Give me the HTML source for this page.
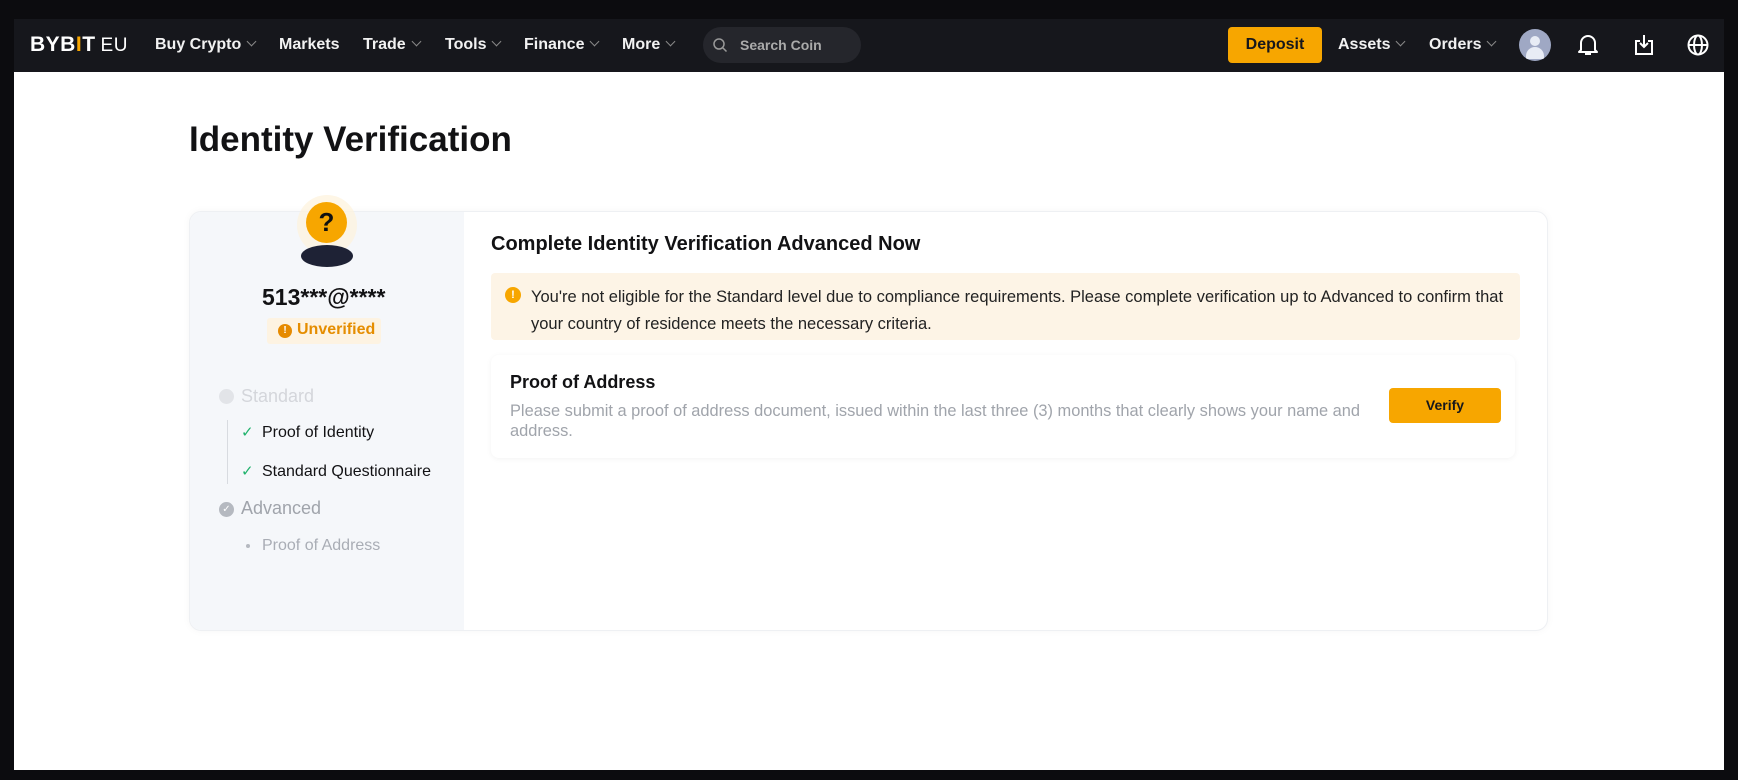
<!DOCTYPE html>
<html><head><meta charset="utf-8"><style>
*{margin:0;padding:0;box-sizing:border-box}
body{width:1738px;height:780px;background:#0c0c0f;position:relative;overflow:hidden;font-family:"Liberation Sans",sans-serif;}
.a{position:absolute;white-space:nowrap}
#nav{left:14px;top:19px;width:1710px;height:53px;background:#16171c}
.n{color:#f2f2f2;font-size:16px;top:36px;font-weight:bold}
.chev{display:inline-block;width:7px;height:7px;border-right:1.2px solid #888;border-bottom:1.2px solid #888;transform:rotate(45deg);margin-left:7px;position:relative;top:-4px}
#main{left:14px;top:72px;width:1710px;height:698px;background:#fff}
</style></head><body>
<div id="nav" class="a"></div>
<div class="a" style="left:30px;top:33px;color:#fff;font-size:21px;font-weight:bold;letter-spacing:0.5px">BYB<span style="color:#f7a600">I</span>T<span style="font-weight:normal;font-size:19px;margin-left:5px">EU</span></div>
<div class="a n" style="left:155px">Buy Crypto<span class="chev"></span></div>
<div class="a n" style="left:279px">Markets</div>
<div class="a n" style="left:363px">Trade<span class="chev"></span></div>
<div class="a n" style="left:445px">Tools<span class="chev"></span></div>
<div class="a n" style="left:524px">Finance<span class="chev"></span></div>
<div class="a n" style="left:622px">More<span class="chev"></span></div>
<div class="a" style="left:703px;top:27px;width:158px;height:36px;border-radius:18px;background:#25262c"></div>
<svg class="a" style="left:712px;top:37px" width="16" height="16" viewBox="0 0 16 16"><circle cx="7" cy="7" r="5" fill="none" stroke="#999" stroke-width="1.5"/><path d="M11 11l3.5 3.5" stroke="#999" stroke-width="1.5"/></svg>
<div class="a" style="left:740px;top:37px;color:#aaa;font-size:14px;font-weight:bold">Search Coin</div>
<div class="a" style="left:1228px;top:27px;width:94px;height:36px;border-radius:4px;background:#f7a600;color:#16171c;font-weight:bold;font-size:16px;text-align:center;line-height:36px">Deposit</div>
<div class="a n" style="left:1338px">Assets<span class="chev"></span></div>
<div class="a n" style="left:1429px">Orders<span class="chev"></span></div>
<div class="a" style="left:1519px;top:29px;width:32px;height:32px;border-radius:50%;background:#9fa8c4;overflow:hidden"><div class="a" style="left:11px;top:7px;width:10px;height:10px;border-radius:50%;background:#e8ecf5"></div><div class="a" style="left:7px;top:18px;width:18px;height:12px;border-radius:9px 9px 0 0;background:#e8ecf5"></div></div>
<svg class="a" style="left:1577px;top:33px" width="22" height="24" viewBox="0 0 22 24"><path d="M4 17V10a7 7 0 0 1 14 0v7l2 2H2z" fill="none" stroke="#fff" stroke-width="2" stroke-linejoin="round"/><path d="M8 21h6" stroke="#fff" stroke-width="2"/></svg>
<svg class="a" style="left:1633px;top:33px" width="22" height="23" viewBox="0 0 22 23"><path d="M7 8H3v13h16V8h-4" fill="none" stroke="#fff" stroke-width="2"/><path d="M11 2v12M7 10l4 4 4-4" fill="none" stroke="#fff" stroke-width="2"/></svg>
<svg class="a" style="left:1687px;top:34px" width="22" height="22" viewBox="0 0 22 22"><circle cx="11" cy="11" r="9.5" fill="none" stroke="#fff" stroke-width="2"/><ellipse cx="11" cy="11" rx="4" ry="9.5" fill="none" stroke="#fff" stroke-width="2"/><path d="M1.5 11h19" stroke="#fff" stroke-width="2"/></svg>

<div id="main" class="a"></div>
<div class="a" style="left:189px;top:120px;font-size:35px;font-weight:bold;color:#121214">Identity Verification</div>

<div class="a" style="left:189px;top:211px;width:1359px;height:420px;border:1px solid #eef0f3;border-radius:12px;background:#fff;box-shadow:0 0 8px rgba(0,0,0,0.04);overflow:hidden">
 <div class="a" style="left:0;top:0;width:274px;height:420px;background:#f5f7fa"></div>
</div>
<div class="a" style="left:297px;top:195px;width:60px;height:60px;border-radius:50%;background:#fdf2dc;opacity:.7"></div>
<div class="a" style="left:306px;top:202px;width:41px;height:41px;border-radius:50%;background:#f7a600;color:#111;font-weight:bold;font-size:26px;text-align:center;line-height:41px">?</div>
<div class="a" style="left:301px;top:245px;width:52px;height:22px;border-radius:50%;background:#1e2235"></div>
<div class="a" style="left:262px;top:284px;font-size:23px;font-weight:bold;color:#121214">513***@****</div>
<div class="a" style="left:267px;top:318px;width:114px;height:26px;background:#fdf3e2;border-radius:3px"></div>
<div class="a" style="left:278px;top:324px;width:14px;height:14px;border-radius:50%;background:#e68a00;color:#fff;font-size:10px;font-weight:bold;text-align:center;line-height:14px">!</div>
<div class="a" style="left:297px;top:321px;font-size:16px;color:#e58d00;font-weight:bold">Unverified</div>

<div class="a" style="left:219px;top:389px;width:15px;height:15px;border-radius:50%;background:#e2e4e8"></div>
<div class="a" style="left:241px;top:386px;font-size:18px;color:#d4d6db">Standard</div>
<div class="a" style="left:227px;top:420px;width:1px;height:64px;background:#d8dbe0"></div>
<div class="a" style="left:241px;top:423px;font-size:15px;color:#20b26c">✓</div>
<div class="a" style="left:262px;top:424px;font-size:16px;color:#121214">Proof of Identity</div>
<div class="a" style="left:241px;top:462px;font-size:15px;color:#20b26c">✓</div>
<div class="a" style="left:262px;top:463px;font-size:16px;color:#121214">Standard Questionnaire</div>
<div class="a" style="left:219px;top:502px;width:15px;height:15px;border-radius:50%;background:#b5b9c0;color:#fff;font-size:10px;text-align:center;line-height:15px">✓</div>
<div class="a" style="left:241px;top:498px;font-size:18px;color:#a0a4ab">Advanced</div>
<div class="a" style="left:246px;top:544px;width:4px;height:4px;border-radius:50%;background:#b5b9c0"></div>
<div class="a" style="left:262px;top:537px;font-size:16px;color:#a9adb5">Proof of Address</div>

<div class="a" style="left:491px;top:233px;font-size:20px;font-weight:bold;color:#121214">Complete Identity Verification Advanced Now</div>
<div class="a" style="left:491px;top:273px;width:1029px;height:67px;background:#fdf4e6;border-radius:4px"></div>
<div class="a" style="left:505px;top:287px;width:16px;height:16px;border-radius:50%;background:#f7a600;color:#fff;font-size:11px;font-weight:bold;text-align:center;line-height:16px">!</div>
<div class="a" style="left:531px;top:284px;font-size:16.5px;color:#222;line-height:27px">You're not eligible for the Standard level due to compliance requirements. Please complete verification up to Advanced to confirm that<br>your country of residence meets the necessary criteria.</div>
<div class="a" style="left:491px;top:355px;width:1024px;height:103px;border-radius:8px;box-shadow:0 1px 6px rgba(0,0,0,0.05)"></div>
<div class="a" style="left:510px;top:372px;font-size:18px;font-weight:bold;color:#121214">Proof of Address</div>
<div class="a" style="left:510px;top:401px;font-size:16.4px;color:#a0a4ab;line-height:20px">Please submit a proof of address document, issued within the last three (3) months that clearly shows your name and<br>address.</div>
<div class="a" style="left:1389px;top:388px;width:112px;height:35px;border-radius:4px;background:#f7a600;color:#16171c;font-weight:bold;font-size:14px;text-align:center;line-height:35px">Verify</div>
</body></html>
